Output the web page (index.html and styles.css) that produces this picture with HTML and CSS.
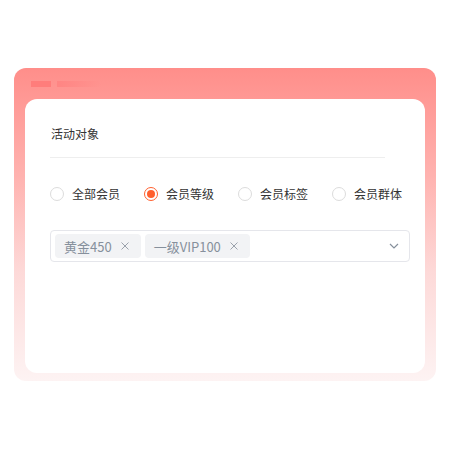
FILE: index.html
```html
<!DOCTYPE html>
<html lang="zh-CN">
<head>
  <meta charset="UTF-8" />
  <meta name="viewport" content="width=device-width, initial-scale=1.0"/>
  <title>活动对象</title>
  <link rel="stylesheet" href="styles.css">
</head>
<body>
  <div class="panel">
    <div class="panel-bars">
      <span class="bar"></span>
      <span class="bar bar-fade"></span>
    </div>

    <div class="card">
      <div class="card-title">活动对象</div>

      <div class="radio-group">
        <label class="radio"><span class="radio-dot"></span>全部会员</label>
        <label class="radio checked"><span class="radio-dot"></span>会员等级</label>
        <label class="radio"><span class="radio-dot"></span>会员标签</label>
        <label class="radio"><span class="radio-dot"></span>会员群体</label>
      </div>

      <div class="select">
        <span class="tag">黄金450
          <svg class="tag-close" width="8" height="8" viewBox="0 0 8 8">
            <path d="M0.5 0.5 L7.5 7.5 M7.5 0.5 L0.5 7.5" stroke="#9aa1ab" stroke-width="1" />
          </svg>
        </span>
        <span class="tag">一级VIP100
          <svg class="tag-close" width="8" height="8" viewBox="0 0 8 8">
            <path d="M0.5 0.5 L7.5 7.5 M7.5 0.5 L0.5 7.5" stroke="#9aa1ab" stroke-width="1" />
          </svg>
        </span>
        <svg class="arrow" width="10" height="6" viewBox="0 0 10 6">
          <polyline points="1,1 5,5 9,1" fill="none" stroke="#86909c" stroke-width="1.2" />
        </svg>
      </div>
    </div>
  </div>
</body>
</html>
```

FILE: styles.css
```css
html, body {
  margin: 0;
  padding: 0;
  background: #fff;
}

body {
  font-family: "Noto Sans CJK SC", "Noto Sans", sans-serif;
  color: #333;
}

.panel {
  margin: 68px 14px 0;
  height: 313px;
  box-sizing: border-box;
  padding: 13px 11px 8px;
  border-radius: 12px;
  background: linear-gradient(180deg, #ff8e8a 0%, #ffb3b0 35%, #fdd9d8 65%, #fdf3f3 100%);
}

.panel-bars {
  display: flex;
  gap: 6px;
  padding-left: 6px;
  margin-bottom: 12px;
}

.bar {
  width: 20px;
  height: 6px;
  background: #ff7d7b;
}

.bar-fade {
  width: 44px;
  background: linear-gradient(90deg, #ff8583, rgba(255, 140, 138, 0));
}

.card {
  height: 274px;
  box-sizing: border-box;
  padding: 0 15px 0 25px;
  background: #fff;
  border-radius: 12px;
}

.card-title {
  margin-right: 25px;
  padding: 25px 1px 13px;
  font-size: 12px;
  line-height: 20px;
  border-bottom: 1px solid #eeeeee;
}

.radio-group {
  display: flex;
  margin-top: 26px;
  height: 20px;
}

.radio {
  display: flex;
  align-items: center;
  flex: 0 0 94px;
  font-size: 12px;
  line-height: 20px;
  color: #333;
}

.radio-dot {
  flex: 0 0 14px;
  height: 14px;
  box-sizing: border-box;
  border: 1px solid #dcdcdc;
  border-radius: 50%;
  margin-right: 8px;
  position: relative;
}

.radio.checked .radio-dot {
  border-color: #ff5f2e;
}

.radio.checked .radio-dot::after {
  content: "";
  position: absolute;
  top: 2px;
  left: 2px;
  width: 8px;
  height: 8px;
  border-radius: 50%;
  background: #ff5f2e;
}

.select {
  margin-top: 26px;
  height: 32px;
  box-sizing: border-box;
  border: 1px solid #e5e6eb;
  border-radius: 4px;
  padding: 0 10px 0 4px;
  display: flex;
  align-items: center;
  gap: 4px;
}

.tag {
  display: flex;
  align-items: center;
  height: 24px;
  padding: 0 12px 0 9px;
  background: #f2f3f5;
  border-radius: 4px;
  font-size: 13px;
  color: #86909c;
}

.tag-close {
  margin-left: 9px;
}

.arrow {
  margin-left: auto;
}
```
